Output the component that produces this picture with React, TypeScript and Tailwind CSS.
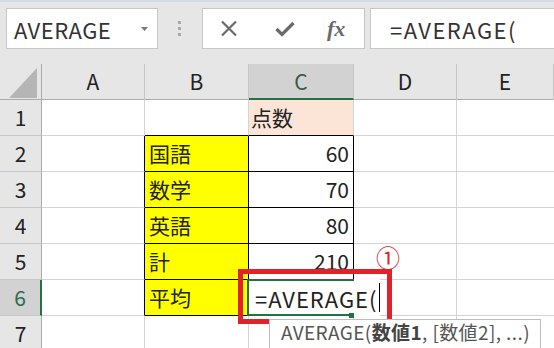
import React from 'react';

const font = { fontFamily: '"Noto Sans CJK JP", "Noto Sans", sans-serif' };

const rows = [
  { n: 1, b: '', c: '点数' },
  { n: 2, b: '国語', c: '60' },
  { n: 3, b: '数学', c: '70' },
  { n: 4, b: '英語', c: '80' },
  { n: 5, b: '計', c: '210' },
  { n: 6, b: '平均', c: '' },
  { n: 7, b: '', c: '' },
];

function Toolbar() {
  return (
    <div className="flex h-[64px] items-start border-t-2 border-[#d5dbe6] bg-[#e6e6e6] pt-[6px]">
      {/* Name box */}
      <div className="ml-[6px] flex h-[41px] w-[152px] items-center justify-between border border-[#c6c6c6] bg-white pl-[7px] pr-[9px]">
        <span className="text-[22px] leading-none tracking-[0.5px] text-[#333]">AVERAGE</span>
        <svg width="7" height="4" viewBox="0 0 7 4">
          <path d="M0 0h7L3.5 4z" fill="#777" />
        </svg>
      </div>
      {/* Dots */}
      <div className="ml-[20px] mt-[13px] flex w-[4px] flex-col gap-[3px]">
        <div className="h-[3px] w-[3px] bg-[#a8a8a8]" />
        <div className="h-[3px] w-[3px] bg-[#a8a8a8]" />
        <div className="h-[3px] w-[3px] bg-[#a8a8a8]" />
      </div>
      {/* Buttons */}
      <div className="ml-[20px] flex h-[41px] w-[163px] items-center border border-[#c6c6c6] bg-white">
        <svg className="ml-[17px]" width="18" height="17" viewBox="0 0 18 17">
          <path d="M2 1.5l14 14M16 1.5l-14 14" stroke="#6a6a6a" strokeWidth="2.2" />
        </svg>
        <svg className="ml-[37px]" width="20" height="16" viewBox="0 0 20 16">
          <path d="M1.5 8l5.5 5.5L18.5 2" stroke="#6a6a6a" strokeWidth="3.2" fill="none" />
        </svg>
        <span
          className="ml-[32px] text-[22px] font-bold italic leading-none text-[#6a6a6a]"
          style={{ fontFamily: '"Liberation Serif", serif' }}
        >
          fx
        </span>
      </div>
      {/* Formula bar */}
      <div className="ml-[5px] flex h-[41px] flex-1 items-center border-y border-l border-[#c6c6c6] bg-white pl-[19px]">
        <span className="text-[22px] leading-none tracking-[1.5px] text-[#333]">=AVERAGE(</span>
      </div>
    </div>
  );
}

function App() {
  const cols = 'grid-cols-[42px_103px_104px_105px_103px_97px]';
  return (
    <div className="relative h-[348px] w-[554px] overflow-hidden bg-white" style={font}>
      <Toolbar />

      {/* Column headers */}
      <div className={`grid h-[36px] ${cols} border-b border-[#ababab] bg-[#e6e6e6]`}>
        <div className="flex items-end justify-end border-r border-[#ababab] pb-[2px] pr-[4px]">
          <svg width="28" height="30" viewBox="0 0 28 30">
            <path d="M28 0v30H0z" fill="#b5b5b5" />
          </svg>
        </div>
        {['A', 'B', 'C', 'D', 'E'].map((l) => (
          <div
            key={l}
            className={
              l === 'C'
                ? 'flex items-center justify-center border-b-2 border-r border-b-[#217346] border-r-[#c6c6c6] bg-[#d2d2d2] pt-[2px] text-[21px] text-[#3a5a48]'
                : 'flex items-center justify-center border-r border-[#c6c6c6] text-[21px] text-[#222]'
            }
          >
            {l}
          </div>
        ))}
      </div>

      {/* Rows */}
      {rows.map((r) => {
        const inB = r.n >= 2 && r.n <= 6;
        const inC = r.n >= 2 && r.n <= 5;
        return (
          <div key={r.n} className={`grid h-[36px] ${cols}`}>
            <div
              className={
                r.n === 6
                  ? 'flex items-center justify-center border-b border-r-2 border-b-[#c6c6c6] border-r-[#217346] bg-[#d2d2d2] text-[21px] text-[#2e6b4a]'
                  : 'flex items-center justify-center border-b border-r border-b-[#c6c6c6] border-r-[#ababab] bg-[#e6e6e6] text-[21px] text-[#222]'
              }
            >
              {r.n}
            </div>
            {/* A */}
            <div
              className={`border-b border-r border-b-[#d4d4d4] ${inB ? 'border-r-black' : 'border-r-[#d4d4d4]'}`}
            />
            {/* B */}
            <div
              className={
                inB
                  ? 'flex items-center border-b border-r border-black bg-[#ffff00] pl-[4px] text-[21px] text-[#222]'
                  : r.n === 1
                    ? 'border-b border-r border-b-black border-r-[#d4d4d4]'
                    : 'border-b border-r border-[#d4d4d4]'
              }
            >
              {r.b}
            </div>
            {/* C */}
            <div
              className={
                r.n === 1
                  ? 'flex items-center border-b border-r border-b-black border-r-[#d4d4d4] bg-[#fce4d6] pl-[2px] text-[21px] text-[#222]'
                  : inC
                    ? 'flex items-center justify-end border-b border-r border-black pr-[4px] text-[21px] text-[#222]'
                    : r.n === 6
                      ? 'relative'
                      : 'border-b border-r border-[#d4d4d4]'
              }
            >
              {r.n === 6 ? (
                <div className="absolute left-[-2px] top-[-1px] z-10 flex h-[37px] w-[133px] items-center bg-white">
                  <div className="absolute left-0 top-0 h-[2px] w-[107px] bg-[#217346]" />
                  <div className="absolute left-0 top-0 h-[37px] w-[2px] bg-[#217346]" />
                  <div className="absolute bottom-0 left-0 h-[2px] w-[103px] bg-[#217346]" />
                  <div className="absolute bottom-[-2px] left-[102px] h-[5px] w-[5px] bg-[#217346]" />
                  <span className="pl-[8px] text-[22px] leading-none tracking-[1px] text-[#222]">=AVERAGE(</span>
                  <div className="ml-[2px] h-[29px] w-[1px] bg-black" />
                </div>
              ) : (
                r.c
              )}
            </div>
            {/* D */}
            <div className="border-b border-r border-[#d4d4d4]" />
            {/* E */}
            <div className="border-b border-[#d4d4d4]" />
          </div>
        );
      })}

      {/* Red highlight */}
      <div className="absolute left-[238px] top-[269px] z-20 h-[55px] w-[154px] border-[5px] border-[#e0222b]" />
      <div className="absolute left-[376px] top-[245px] z-20 text-[24px] leading-none text-[#e0222b]">①</div>

      {/* Tooltip */}
      <div className="absolute left-[269px] top-[319px] z-30 h-[40px] w-[272px] border border-[#bdbdbd] bg-white pl-[11px] pt-[2px] text-[19px] leading-none tracking-[0.4px] text-[#555]">
        AVERAGE(<span className="font-bold text-[#444]">数値1</span>, [数値2], ...)
      </div>
    </div>
  );
}

export default App;
